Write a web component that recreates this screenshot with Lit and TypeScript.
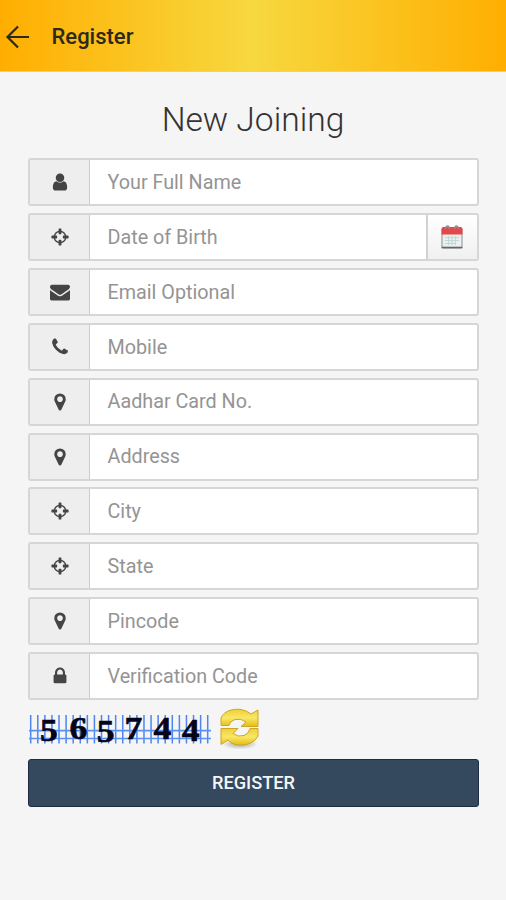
import { LitElement, html, css, svg } from "lit";
import { customElement } from "lit/decorators.js";

const ICONS: Record<string, string> = {
  user: "M1536 1399q0 109-62.5 187t-150.5 78h-854q-88 0-150.5-78t-62.5-187q0-85 8.5-160.5t31.5-152 58.5-131 94-89 134.5-34.5q131 128 313 128t313-128q76 0 134.5 34.5t94 89 58.5 131 31.5 152 8.5 160.5zm-256-887q0 159-112.5 271.5t-271.5 112.5-271.5-112.5-112.5-271.5 112.5-271.5 271.5-112.5 271.5 112.5 112.5 271.5z",
  crosshairs: "M1325 1024h-109q-26 0-45-19t-19-45v-128q0-26 19-45t45-19h109q-32-108-112.5-188.5t-188.5-112.5v109q0 26-19 45t-45 19h-128q-26 0-45-19t-19-45v-109q-108 32-188.5 112.5t-112.5 188.5h109q26 0 45 19t19 45v128q0 26-19 45t-45 19h-109q32 108 112.5 188.5t188.5 112.5v-109q0-26 19-45t45-19h128q26 0 45 19t19 45v109q108-32 188.5-112.5t112.5-188.5zm339-192v128q0 26-19 45t-45 19h-143q-37 161-154.5 278.5t-278.5 154.5v143q0 26-19 45t-45 19h-128q-26 0-45-19t-19-45v-143q-161-37-278.5-154.5t-154.5-278.5h-143q-26 0-45-19t-19-45v-128q0-26 19-45t45-19h143q37-161 154.5-278.5t278.5-154.5v-143q0-26 19-45t45-19h128q26 0 45 19t19 45v143q161 37 278.5 154.5t154.5 278.5h143q26 0 45 19t19 45z",
  envelope: "M1792 710v794q0 66-47 113t-113 47h-1472q-66 0-113-47t-47-113v-794q44 49 101 87 362 246 497 345 57 42 92.5 65.5t94.5 48 110 24.5h2q51 0 110-24.5t94.5-48 92.5-65.5q170-123 498-345 57-39 100-87zm0-294q0 79-49 151t-122 123q-376 261-468 325-10 7-42.5 31t-54 38.5-52 32.5-57.5 27-50 9h-2q-23 0-50-9t-57.5-27-52-32.5-54-38.5-42.5-31q-91-64-262-182.5t-205-142.5q-62-42-117-115.5t-55-136.5q0-78 41.5-130t118.5-52h1472q65 0 112.5 47t47.5 113z",
  phone: "M1600 1240q0 27-10 70.5t-21 68.5q-21 50-122 106-94 51-186 51-27 0-53-3.5t-57.5-12.5-47-14.5-55.5-20.5-49-18q-98-35-175-83-127-79-264-216t-216-264q-48-77-83-175-3-9-18-49t-20.5-55.5-14.5-47-12.5-57.5-3.5-53q0-92 51-186 56-101 106-122 25-11 68.5-21t70.5-10q14 0 21 3 18 6 53 76 11 19 30 54t35 63.5 31 53.5q3 4 17.5 25t21.5 35.5 7 28.5q0 20-28.5 50t-62 55-62 53-28.5 46q0 9 5 22.5t8.5 20.5 14 24 11.5 19q76 137 174 235t235 174q2 1 19 11.5t24 14 20.5 8.5 22.5 5q18 0 46-28.5t53-62 55-62 50-28.5q14 0 28.5 7t35.5 21.5 25 17.5q25 15 53.5 31t63.5 35 54 30q70 35 76 53 3 7 3 21z",
  marker: "M1152 640q0-106-75-181t-181-75-181 75-75 181 75 181 181 75 181-75 75-181zm256 0q0 109-33 179l-364 774q-16 33-47.5 52t-67.5 19-67.5-19-46.5-52l-365-774q-33-70-33-179 0-212 150-362t362-150 362 150 150 362z",
  lock: "M640 768h512v-192q0-106-75-181t-181-75-181 75-75 181v192zm832 96v576q0 40-28 68t-68 28h-960q-40 0-68-28t-28-68v-576q0-40 28-68t68-28h32v-192q0-184 132-316t316-132 316 132 132 316v192h32q40 0 68 28t28 68z",
};

const FIELDS = [
  { icon: "user", label: "Your Full Name" },
  { icon: "crosshairs", label: "Date of Birth", calendar: true },
  { icon: "envelope", label: "Email Optional" },
  { icon: "phone", label: "Mobile" },
  { icon: "marker", label: "Aadhar Card No." },
  { icon: "marker", label: "Address" },
  { icon: "crosshairs", label: "City" },
  { icon: "crosshairs", label: "State" },
  { icon: "marker", label: "Pincode" },
  { icon: "lock", label: "Verification Code" },
];

const DIGITS = [
  { d: "5", x: 21, y: 25.5 },
  { d: "6", x: 50.3, y: 24 },
  { d: "5", x: 77.7, y: 26.5 },
  { d: "7", x: 105.3, y: 23.5 },
  { d: "4", x: 134.3, y: 24 },
  { d: "4", x: 162.7, y: 26 },
];

@customElement("app-root")
export class AppRoot extends LitElement {
  static styles = css`
    :host {
      display: block;
      min-height: 900px;
      background: #f5f5f5;
      font-family: Roboto, "Liberation Sans", sans-serif;
    }
    .bar {
      box-sizing: border-box;
      height: 72px;
      display: flex;
      align-items: center;
      gap: 20.5px;
      padding: 2px 0 0 5px;
      background: linear-gradient(90deg, #ffae00 0%, #f7d83f 50%, #ffae00 100%);
      border-bottom: 1px solid #dccfae;
      color: #2b2a1c;
    }
    .bar svg { width: 26px; height: 26px; margin-top: 1px; }
    .bar span { font-size: 22px; font-weight: 500; line-height: 26px; }
    h1 {
      margin: 0;
      padding: 27px 0 17.400px;
      text-align: center;
      font-size: 33.6px;
      font-weight: 300;
      line-height: 42px;
      color: #333;
    }
    .form { padding: 0 27px 0 28px; display: flex; flex-direction: column; gap: 6.85px; }
    .row {
      box-sizing: border-box;
      height: 48px;
      display: flex;
      border: 2px solid #d6d6d6;
      border-radius: 3px;
      background: #fff;
    }
    .addon {
      box-sizing: border-box;
      width: 60px;
      display: flex;
      align-items: center;
      justify-content: center;
      background: #eee;
      border-right: 1px solid #ccc;
      color: #444;
    }
    .addon svg { width: 20px; height: 20px; }
    .input { flex: 1; padding: 0.6px 0 0 17.5px; font-size: 19.75px; line-height: 43.400px; color: #949494; }
    .cal {
      box-sizing: border-box;
      width: 51px;
      padding-right: 2px;
      border-left: 2px solid #d2d2d2;
      background: linear-gradient(#fff, #f0f0f0);
      display: flex;
      align-items: center;
      justify-content: center;
    }
    .captcha { display: flex; padding: 7.600px 0 0 28px; height: 59.100px; box-sizing: border-box; }
    .code { width: 184px; height: 42px; margin-top: 1px; overflow: visible; }
    .code text { font-family: "Liberation Serif", serif; font-weight: 700; font-size: 31px; fill: #04041a; stroke: #04041a; stroke-width: 0.6; }
    .refresh { width: 44px; height: 44px; margin-left: 5px; }
    .submit {
      box-sizing: border-box;
      margin: 0 27px 0 28px;
      height: 48px;
      border: 1px solid #1d2b44;
      border-radius: 3px;
      background: #34495e;
      color: #f5f5f5;
      text-align: center;
      font-size: 18.2px;
      font-weight: 500;
      line-height: 46px;
    }
  `;

  calendar() {
    return html`<svg width="22" height="24" viewBox="0 0 22 24">
      <rect x="1" y="3" width="20" height="20" rx="1.5" fill="#e9f0ef" stroke="#8b8f8f" />
      <path d="M.5 22.5h21" stroke="#666" stroke-width="1.6" />
      <path d="M.5 9.500V4q0-2 2-2h17q2 0 2 2v5.500z" fill="#e5484a" />
      <path d="M4 12.500h14M4 15.500h14M4 18.500h11M7.500 11v9M11 11v9M14.500 11v9" stroke="#c3d6d8" />
      <path d="M5 4q-.5-3 1.500-3T8 4M14 4q-.5-3 1.500-3T17 4" fill="none" stroke="#9a8d8a" stroke-width="1.300" />
    </svg>`;
  }

  captcha() {
    const columns = Array.from({ length: 26 }, (_, i) => i * 7.08 + 2.7);
    return html`<svg class="code" viewBox="0 -6 184 42">
      ${columns.map((x) => svg`<path d="M${x} 0v28.500" stroke="#4c86ee" stroke-width="1.500" />`)}
      <path d="M1 15.700h182M1 23.500h182" stroke="#5b91f0" stroke-width="1.700" />
      ${DIGITS.map((g) => svg`<text text-anchor="middle" transform="translate(${g.x} ${g.y}) scale(1.15 1)">${g.d}</text>`)}
    </svg>`;
  }

  refresh() {
    return html`<svg class="refresh" viewBox="0 0 44 44">
      <defs>
        <linearGradient id="gold" x2="0" y2="1"><stop stop-color="#efcf38" /><stop offset=".5" stop-color="#f9e766" /><stop offset="1" stop-color="#e3bd12" /></linearGradient>
        <radialGradient id="shade"><stop stop-color="#777" stop-opacity=".65" /><stop offset="1" stop-color="#777" stop-opacity="0" /></radialGradient>
      </defs>
      <ellipse cx="23" cy="36" rx="18" ry="5.500" fill="url(#shade)" />
      <g fill="url(#gold)" stroke="#cfa522" stroke-width="1" stroke-linejoin="round">
        <path d="M4 17.500V10C7 3 15 .5 24 1.500q6 1 10 4.500L41 2v16.500H24l5-4.500q-5-4-11-2.500-5 1.500-6 6z" />
        <path d="M41 20.500v7.500c-3 6-10 9.500-19 9-6-.5-9-2.500-11-5L4 36.500V20.500h17l-5 5q5 4 11 2 5-2 6-7z" />
      </g>
    </svg>`;
  }

  render() {
    return html`
      <div class="bar">
        <svg viewBox="0 0 26 26" fill="none" stroke="currentColor" stroke-width="2.200"><path d="M24 13H3M13 2.500 2.500 13 13 23.500" /></svg>
        <span>Register</span>
      </div>
      <h1>New Joining</h1>
      <div class="form">
        ${FIELDS.map((f) => html`<div class="row">
          <div class="addon"><svg viewBox="0 0 1792 1792"><path fill="currentColor" d=${ICONS[f.icon]} /></svg></div>
          <div class="input">${f.label}</div>
          ${f.calendar ? html`<div class="cal">${this.calendar()}</div>` : ""}
        </div>`)}
      </div>
      <div class="captcha">${this.captcha()}${this.refresh()}</div>
      <div class="submit">REGISTER</div>
    `;
  }
}
